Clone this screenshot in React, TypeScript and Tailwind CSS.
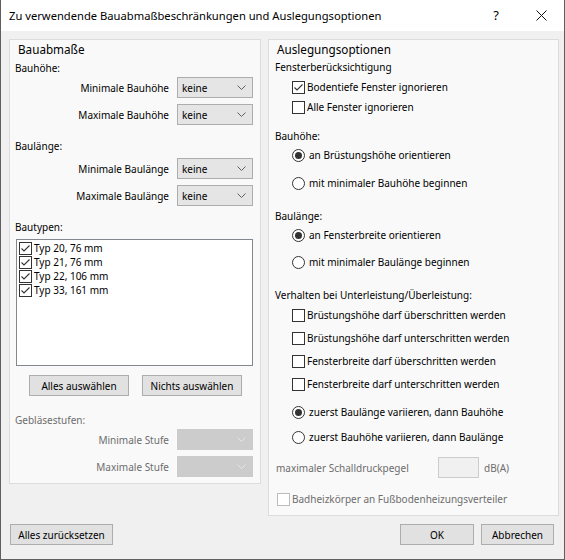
import React from "react";

function Chevron({ disabled }: { disabled?: boolean }) {
  return (
    <svg width="9" height="5" viewBox="0 0 9 5">
      <path
        d="M0.5 0.5 L4.5 4.5 L8.5 0.5"
        fill="none"
        stroke={disabled ? "#e6e6e6" : "#606060"}
        strokeWidth="1"
      />
    </svg>
  );
}

function Combo({ value, disabled }: { value?: string; disabled?: boolean }) {
  return (
    <div
      className={
        disabled
          ? "w-[76px] h-[21px] border border-[#cccccc] bg-[#cccccc] flex items-center justify-end pr-[6px]"
          : "w-[76px] h-[21px] border border-[#adadad] bg-[#e5e5e5] flex items-center justify-between pl-[4px] pr-[6px]"
      }
    >
      {!disabled && <span>{value}</span>}
      <Chevron disabled={disabled} />
    </div>
  );
}

function ComboRow({
  label,
  disabled,
  className,
}: {
  label: string;
  disabled?: boolean;
  className: string;
}) {
  return (
    <div className={`h-[21px] flex items-center justify-end gap-[8px] ${className}`}>
      <span className={disabled ? "text-[#6d6d6d]" : ""}>{label}</span>
      <Combo value="keine" disabled={disabled} />
    </div>
  );
}

function CheckBox({ checked, disabled }: { checked?: boolean; disabled?: boolean }) {
  return (
    <div
      className={
        disabled
          ? "w-[13px] h-[13px] border border-[#bcbcbc] bg-white shrink-0"
          : "w-[13px] h-[13px] border border-[#333333] bg-white shrink-0 flex items-center justify-center"
      }
    >
      {checked && (
        <svg width="11" height="11" viewBox="0 0 11 11">
          <path d="M1.5 5.5 L4 8 L9.5 2.5" fill="none" stroke="#333333" strokeWidth="1.1" />
        </svg>
      )}
    </div>
  );
}

function Radio({ checked }: { checked?: boolean }) {
  return (
    <div className="w-[13px] h-[13px] rounded-full border border-[#333333] bg-white shrink-0 flex items-center justify-center">
      {checked && <div className="w-[7px] h-[7px] rounded-full bg-[#333333]" />}
    </div>
  );
}

function CheckRow({ label, checked, className }: { label: string; checked?: boolean; className: string }) {
  return (
    <div className={`h-[16px] flex items-center gap-[2px] ml-[17px] ${className}`}>
      <CheckBox checked={checked} />
      <span>{label}</span>
    </div>
  );
}

function RadioRow({ label, checked, className }: { label: string; checked?: boolean; className: string }) {
  return (
    <div className={`h-[16px] flex items-center gap-[4px] ml-[17px] ${className}`}>
      <Radio checked={checked} />
      <span>{label}</span>
    </div>
  );
}

function Button({ label, className }: { label: string; className: string }) {
  return (
    <div className={`h-[21px] border border-[#adadad] bg-[#e1e1e1] flex items-center justify-center ${className}`}>
      {label}
    </div>
  );
}

const types = ["Typ 20, 76 mm", "Typ 21, 76 mm", "Typ 22, 106 mm", "Typ 33, 161 mm"];

export default function App() {
  return (
    <div className="w-[565px] h-[560px] border-x border-b border-[#5f5f5f] bg-[#f0f0f0] flex flex-col font-['Noto_Sans',sans-serif] text-[10px] leading-none text-black">
      <div className="h-[31px] bg-white flex items-center shrink-0">
        <div className="flex-1 pl-[8px] text-[11.2px]">
          Zu verwendende Bauabmaßbeschränkungen und Auslegungsoptionen
        </div>
        <div className="w-[46px] h-full flex items-center justify-center text-[13px] pl-[2px]">?</div>
        <div className="w-[46px] h-full flex items-center justify-center">
          <svg width="11" height="11" viewBox="0 0 11 11">
            <path d="M0.5 0.5 L10.5 10.5 M10.5 0.5 L0.5 10.5" stroke="#111111" strokeWidth="1" />
          </svg>
        </div>
      </div>

      <div className="pl-[8px] pt-[8px]">
        <div className="flex items-start gap-[7px]">
          <div className="w-[252px] h-[445px] border border-[#dcdcdc] bg-[#f9f9f9] pl-[5px] pr-[7px] pt-[2px]">
            <div className="h-[16px] flex items-center ml-[3px] text-[11.7px]">Bauabmaße</div>
            <div className="h-[16px] flex items-center mt-[2px]">Bauhöhe:</div>
            <ComboRow label="Minimale Bauhöhe" className="mt-[1px]" />
            <ComboRow label="Maximale Bauhöhe" className="mt-[6px]" />
            <div className="h-[16px] flex items-center mt-[13px]">Baulänge:</div>
            <ComboRow label="Minimale Baulänge" className="mt-[4px]" />
            <ComboRow label="Maximale Baulänge" className="mt-[6px]" />
            <div className="h-[16px] flex items-center mt-[13px]">Bautypen:</div>
            <div className="mt-[4px] ml-[1px] w-[237px] h-[127px] border border-[#828790] bg-white pt-[1px] pl-[2px]">
              {types.map((t) => (
                <div key={t} className="h-[14px] flex items-center gap-[2px]">
                  <CheckBox checked />
                  <span>{t}</span>
                </div>
              ))}
            </div>
            <div className="mt-[9px] ml-[14px] flex gap-[13px]">
              <Button label="Alles auswählen" className="w-[100px]" />
              <Button label="Nichts auswählen" className="w-[100px]" />
            </div>
            <div className="h-[16px] flex items-center mt-[16px] text-[#6d6d6d]">Gebläsestufen:</div>
            <ComboRow label="Minimale Stufe" disabled className="mt-[1px]" />
            <ComboRow label="Maximale Stufe" disabled className="mt-[6px]" />
          </div>

          <div className="w-[291px] h-[477px] border border-[#dcdcdc] bg-[#f9f9f9] pl-[6px] pt-[2px]">
            <div className="h-[16px] flex items-center ml-[2px] text-[11.7px]">Auslegungsoptionen</div>
            <div className="h-[16px] flex items-center mt-[1px]">Fensterberücksichtigung</div>
            <CheckRow label="Bodentiefe Fenster ignorieren" checked className="mt-[4px]" />
            <CheckRow label="Alle Fenster ignorieren" className="mt-[4px]" />
            <div className="h-[16px] flex items-center mt-[13px]">Bauhöhe:</div>
            <RadioRow label="an Brüstungshöhe orientieren" checked className="mt-[3px]" />
            <RadioRow label="mit minimaler Bauhöhe beginnen" className="mt-[12px]" />
            <div className="h-[16px] flex items-center mt-[17px]">Baulänge:</div>
            <RadioRow label="an Fensterbreite orientieren" checked className="mt-[3px]" />
            <RadioRow label="mit minimaler Baulänge beginnen" className="mt-[11px]" />
            <div className="h-[16px] flex items-center mt-[17px]">Verhalten bei Unterleistung/Überleistung:</div>
            <CheckRow label="Brüstungshöhe darf überschritten werden" className="mt-[4px]" />
            <CheckRow label="Brüstungshöhe darf unterschritten werden" className="mt-[7px]" />
            <CheckRow label="Fensterbreite darf überschritten werden" className="mt-[7px]" />
            <CheckRow label="Fensterbreite darf unterschritten werden" className="mt-[7px]" />
            <RadioRow label="zuerst Baulänge variieren, dann Bauhöhe" checked className="mt-[12px]" />
            <RadioRow label="zuerst Bauhöhe variieren, dann Baulänge" className="mt-[9px]" />
            <div className="h-[21px] flex items-center mt-[12px] text-[#6d6d6d]">
              <span className="w-[163px] pl-[1px]">maximaler Schalldruckpegel</span>
              <div className="w-[41px] h-[21px] border border-[#cccccc] bg-[#f0f0f0]" />
              <span className="ml-[5px]">dB(A)</span>
            </div>
            <div className="h-[16px] flex items-center gap-[2px] ml-[2px] mt-[13px] text-[#6d6d6d]">
              <CheckBox disabled />
              <span>Badheizkörper an Fußbodenheizungsverteiler</span>
            </div>
          </div>
        </div>

        <div className="w-[550px] mt-[8px] pr-[5px] flex items-center">
          <Button label="Alles zurücksetzen" className="w-[103px] ml-[1px]" />
          <div className="flex-1" />
          <Button label="OK" className="w-[74px]" />
          <Button label="Abbrechen" className="w-[73px] ml-[7px]" />
        </div>
      </div>
    </div>
  );
}
